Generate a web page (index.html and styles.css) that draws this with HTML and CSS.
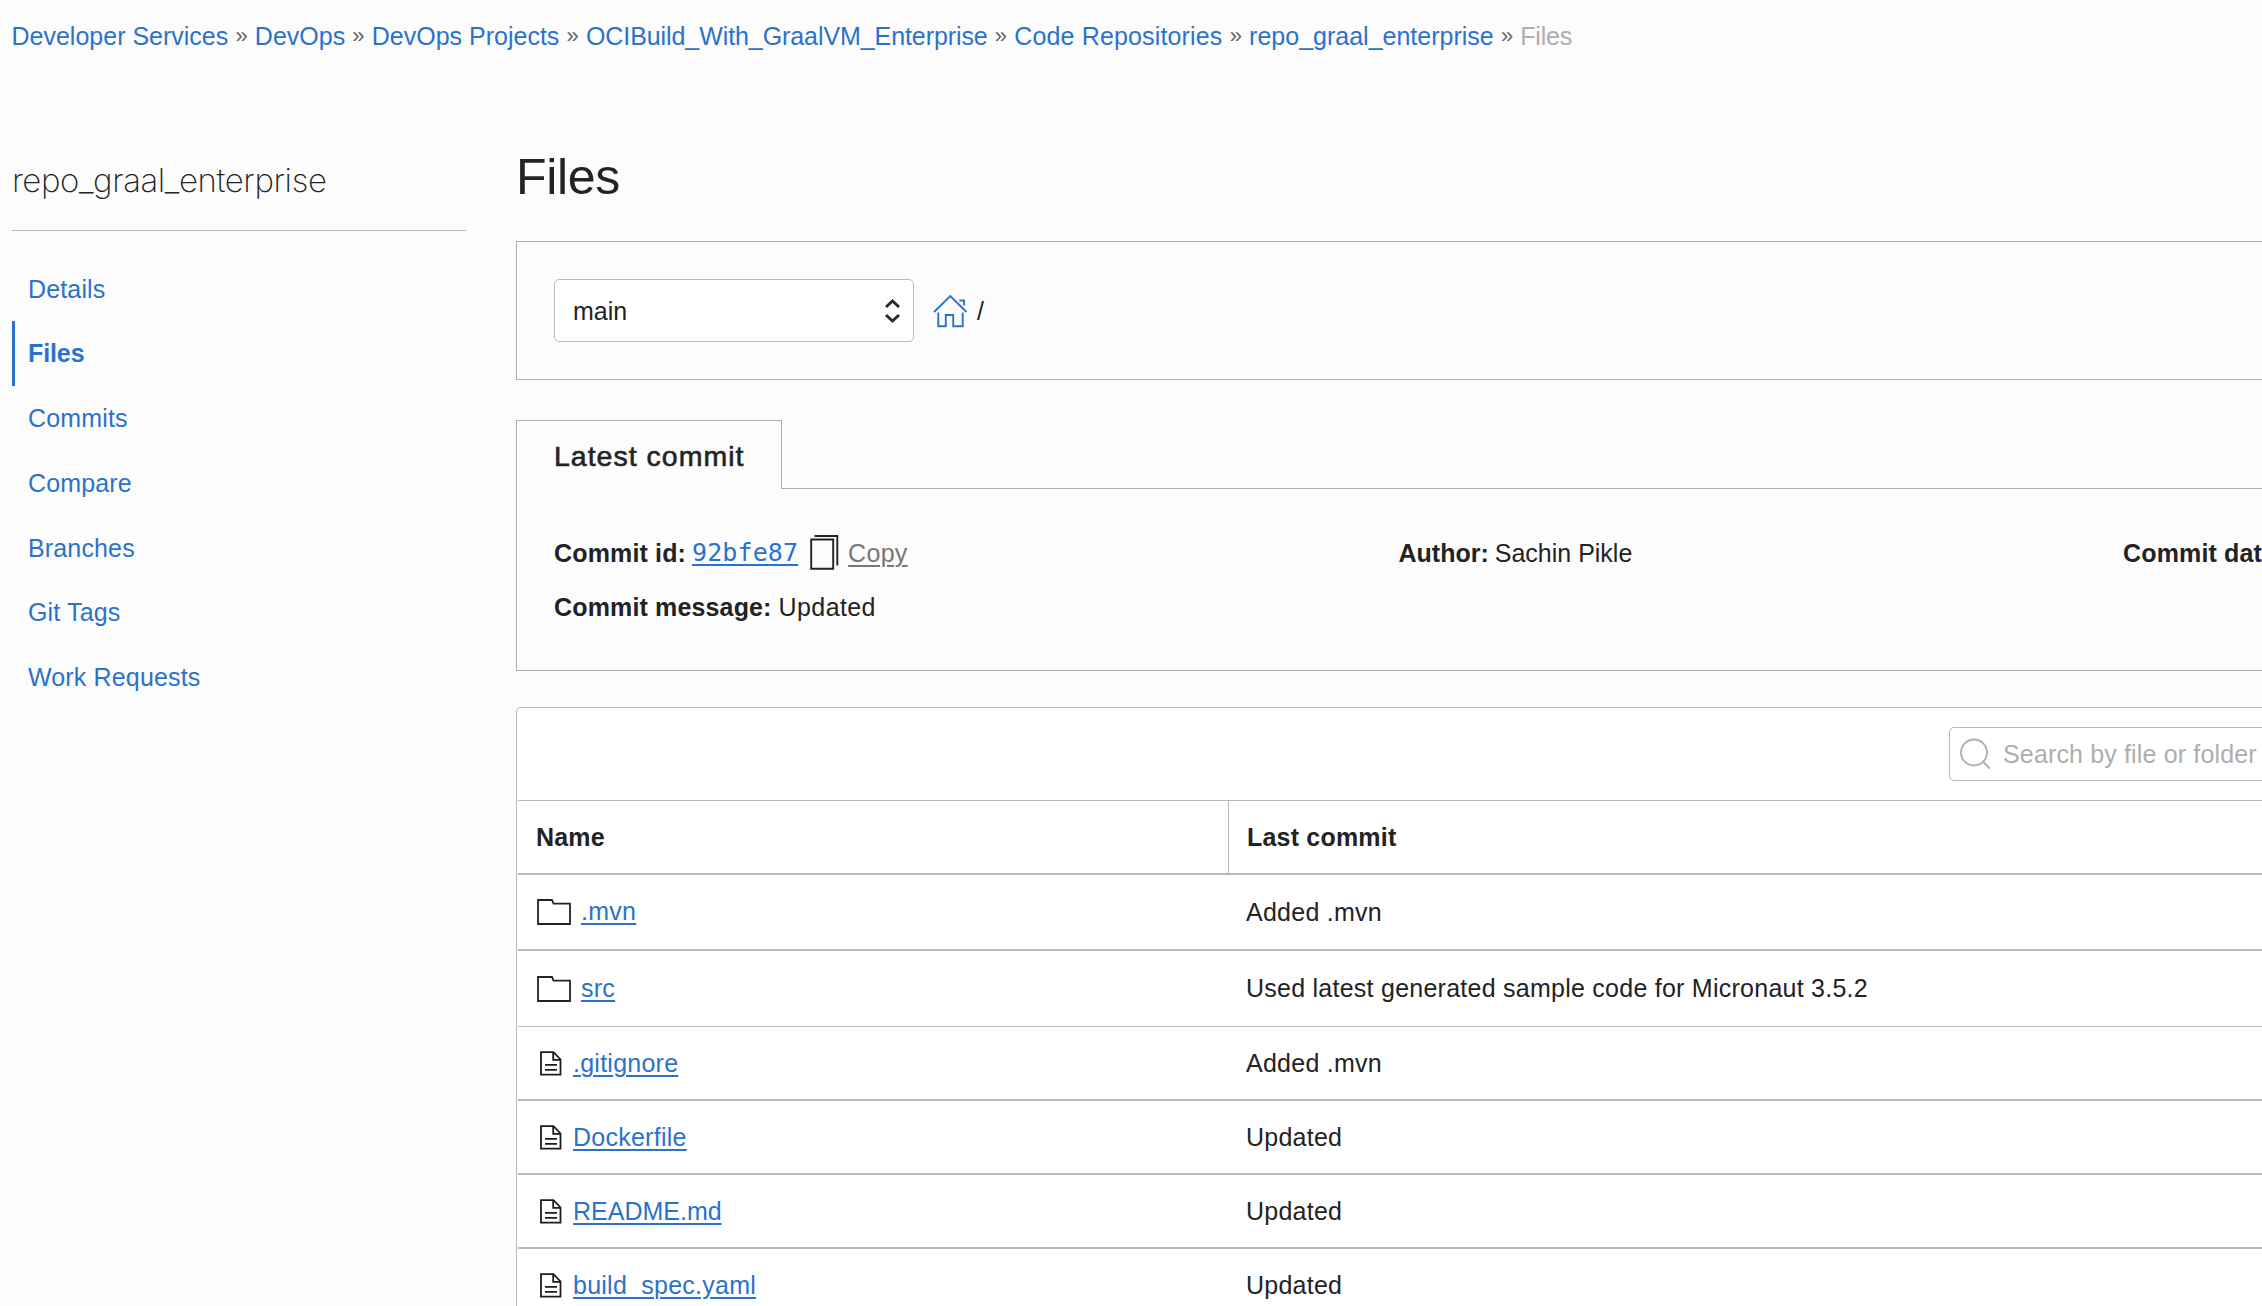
FILE: index.html
```html
<!DOCTYPE html>
<html lang="en">
<head>
<meta charset="utf-8">
<title>Files</title>
<link rel="stylesheet" href="styles.css">
</head>
<body>
<svg width="0" height="0" class="sprite">
  <symbol id="folder" viewBox="0 0 34 26"><path d="M1 1h14l1.5 3.7H33V25H1z" fill="none" stroke="#232323" stroke-width="1.8"/></symbol>
  <symbol id="file" viewBox="0 0 22 25"><path d="M1 1.2h12.5l7 7.3V23.6H1zM13.2 1.2v7.6h7.5M5 13.8h12M5 18.8h12" fill="none" stroke="#1c1c1c" stroke-width="1.8"/></symbol>
</svg>
<nav class="crumbs">
  <a>Developer Services</a><i>»</i><a>DevOps</a><i>»</i><a>DevOps Projects</a><i>»</i><a class="project">OCIBuild_With_GraalVM_Enterprise</a><i>»</i><a class="section">Code Repositories</a><i>»</i><a>repo_graal_enterprise</a><i>»</i><span class="current">Files</span>
</nav>
<div class="layout">
  <aside class="sidebar">
    <h2 class="repo">repo_graal_enterprise</h2>
    <ul class="menu">
      <li><a>Details</a></li>
      <li class="active"><a>Files</a></li>
      <li><a>Commits</a></li>
      <li><a>Compare</a></li>
      <li><a>Branches</a></li>
      <li><a>Git Tags</a></li>
      <li><a>Work Requests</a></li>
    </ul>
  </aside>
  <main class="main">
    <h1>Files</h1>
    <section class="pathbar">
      <div class="select"><span>main</span>
        <svg width="17" height="28" viewBox="0 0 17 28"><path d="M2 10l6.500-6 6.500 6M2 18l6.500 6 6.500-6" fill="none" stroke="#2a2a2a" stroke-width="3"/></svg>
      </div>
      <svg class="home" width="35" height="34" viewBox="0 0 35 34"><path d="M1 18L17.300 2 33.500 18M26.300 6.500h4.700v5M5.300 18.500V32.300H12.800V21h7.400v11.300H29.700V18.500" fill="none" stroke="#2b72cc" stroke-width="1.900"/></svg>
      <span class="slash">/</span>
    </section>
    <div class="tabs"><div class="tab">Latest commit</div></div>
    <section class="commit">
      <div>
        <p><b>Commit id:</b><a class="hash">92bfe87</a><svg class="copy" width="29" height="35" viewBox="0 0 29 35"><path d="M1.200 4.500h22v29.300h-22zM4.500 1h22.800v29.500" fill="none" stroke="#232323" stroke-width="1.900"/></svg><a class="copylink">Copy</a></p>
        <p><b>Commit message:</b><span class="wide">Updated</span></p>
      </div>
      <div><p class="author"><b>Author:</b><span>Sachin Pikle</span></p></div>
      <div><p><b>Commit dat</b></p></div>
    </section>
    <section class="table">
      <div class="toolbar"><div class="search"><svg width="32" height="32" viewBox="0 0 32 32"><circle cx="14" cy="14.500" r="13" fill="none" stroke="#b0b0b0" stroke-width="1.900"/><path d="M23.300 24l6.500 6.500" stroke="#b0b0b0" stroke-width="1.900"/></svg><span>Search by file or folder</span></div></div>
      <div class="row head"><div><b>Name</b></div><div><b>Last commit</b></div></div>
      <div class="row dir"><div><svg class="folder"><use href="#folder"/></svg><a>.mvn</a></div><div><span>Added .mvn</span></div></div>
      <div class="row dir last-dir"><div><svg class="folder"><use href="#folder"/></svg><a>src</a></div><div><span>Used latest generated sample code for Micronaut 3.5.2</span></div></div>
      <div class="row"><div><svg class="file"><use href="#file"/></svg><a>.gitignore</a></div><div><span>Added .mvn</span></div></div>
      <div class="row"><div><svg class="file"><use href="#file"/></svg><a>Dockerfile</a></div><div><span>Updated</span></div></div>
      <div class="row"><div><svg class="file"><use href="#file"/></svg><a class="tight">README.md</a></div><div><span>Updated</span></div></div>
      <div class="row"><div><svg class="file"><use href="#file"/></svg><a>build_spec.yaml</a></div><div><span>Updated</span></div></div>
    </section>
  </main>
</div>
</body>
</html>
```
FILE: styles.css
```css
* { box-sizing: border-box; }
html, body { height: 1306px; overflow: hidden; }
body {
  margin: 0;
  padding: 21px 0 0 11px;
  background: #fcfcfc;
  color: #232323;
  font: 25px/30px "Liberation Sans", Arial, sans-serif;
  white-space: nowrap;
}
h1, h2, p, ul { margin: 0; padding: 0; font-weight: normal; }
a { color: #2b72cc; }
.sprite { position: absolute; }

.crumbs { display: flex; height: 30px; margin-left: 0.5px; }
.crumbs i { width: 26.6px; text-align: center; font-style: normal; font-size: 22px; color: #666; }
.crumbs .project { letter-spacing: -0.08px; }
.crumbs .section { letter-spacing: 0.15px; }
.crumbs .current { color: #aeaeae; letter-spacing: -0.2px; }

.layout { display: grid; grid-template-columns: 455px 1fr; column-gap: 50px; }

.sidebar { padding-top: 108px; }
.repo {
  height: 72px;
  margin-left: 1px;
  border-bottom: 1px solid #b4bac0;
  font: 200 33px/42px Inter, "Liberation Sans", sans-serif;
  letter-spacing: -0.4px;
}
.menu { list-style: none; padding: 25.500px 0 0 1px; letter-spacing: 0.15px; }
.menu li { height: 64.800px; padding: 17px 0 0 16px; }
.menu .active { border-left: 3px solid #2b72cc; padding-left: 13px; font-weight: bold; letter-spacing: -0.1px; }

h1 { padding-top: 98px; height: 190px; font-size: 50px; line-height: 56px; letter-spacing: -0.3px; }
.pathbar {
  display: flex;
  align-items: center;
  height: 139px;
  padding-left: 37px;
  border: 1px solid #aaaeb0;
  border-right: 0;
}
.select {
  display: flex;
  align-items: center;
  justify-content: space-between;
  width: 360px;
  height: 63px;
  padding: 0 12px 0 18px;
  border: 1px solid #b4bac0;
  border-radius: 5px;
  background: #fff;
}
.home { margin: 0 9px 0 19px; }

.tabs { display: flex; margin-top: 40px; }
.tabs::after { content: ""; flex: 1; border-bottom: 1px solid #aaaeb0; }
.tab {
  width: 266px;
  height: 69px;
  padding: 20px 0 0 37px;
  border: 1px solid #aaaeb0;
  border-bottom: 0;
  font-size: 28.5px;
  letter-spacing: 1px;
  -webkit-text-stroke: 0.6px #232323;
}
.commit {
  display: grid;
  grid-template-columns: 845px 724px 1fr;
  height: 182px;
  padding: 46px 0 0 37px;
  border: solid #aaaeb0;
  border-width: 0 0 1px 1px;
}
.commit p { display: flex; align-items: center; height: 36px; margin-bottom: 18px; }
.commit b { margin-right: 7px; letter-spacing: 0.15px; }
.commit .author { margin-left: -0.5px; }
.commit .author b { margin-right: 6px; letter-spacing: 0; }
.commit .wide { letter-spacing: 0.4px; }
.commit a { text-decoration: underline; text-decoration-thickness: 2px; text-underline-offset: 3px; }
.commit .hash { margin-left: -1px; font-family: "DejaVu Sans Mono", monospace; letter-spacing: 0.1px; }
.commit .copylink { color: #777; letter-spacing: 0.3px; }
.copy { margin: -2px 9px 0 12px; }

.table {
  margin-top: 36px;
  height: 640px;
  padding-left: 1px;
  border: 1px solid #b4bac0;
  border-right: 0;
  border-top-left-radius: 5px;
  background: #fff;
}
.toolbar { height: 93px; padding: 19px 0 0 1431px; border-bottom: 1px solid #b4bac0; }
.search {
  display: flex;
  align-items: center;
  height: 54px;
  width: 400px;
  padding-left: 10px;
  border: 1px solid #b4bac0;
  border-radius: 5px;
  color: #aeaeae;
  letter-spacing: 0.15px;
}
.search span { margin-left: 11px; }
.row { display: grid; grid-template-columns: 710px 1fr; height: 74px; border-bottom: 2px solid #b4bac0; letter-spacing: 0.25px; }
.row > div { display: flex; align-items: center; padding-left: 18px; }
.row a { text-decoration: underline; text-decoration-thickness: 2px; text-underline-offset: 3px; }
.row .tight { letter-spacing: 0; }
.head { letter-spacing: 0.2px; }
.head > div + div { border-left: 1px solid #b4bac0; }
.dir { height: 76px; }
.dir a { margin-top: -2px; }
.last-dir { border-bottom-width: 1px; }
.last-dir span { margin-top: -1px; }
.folder { width: 34px; height: 26px; margin: 0 10px 0 1px; }
.file { width: 22px; height: 25px; margin: 1px 11px 0 4px; }
```
